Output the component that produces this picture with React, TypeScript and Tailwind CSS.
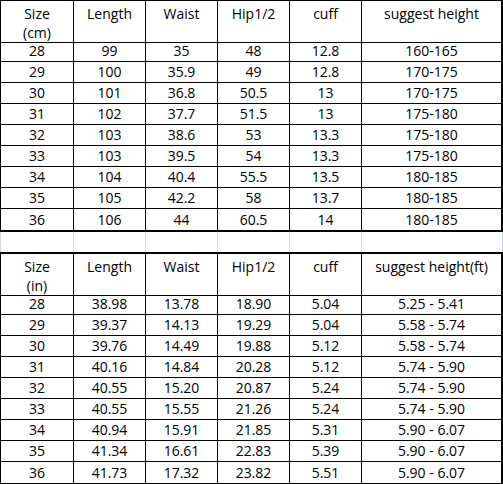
import React from "react";

const t1: string[][] = [
  ["28", "99", "35", "48", "12.8", "160-165"],
  ["29", "100", "35.9", "49", "12.8", "170-175"],
  ["30", "101", "36.8", "50.5", "13", "170-175"],
  ["31", "102", "37.7", "51.5", "13", "175-180"],
  ["32", "103", "38.6", "53", "13.3", "175-180"],
  ["33", "103", "39.5", "54", "13.3", "175-180"],
  ["34", "104", "40.4", "55.5", "13.5", "180-185"],
  ["35", "105", "42.2", "58", "13.7", "180-185"],
  ["36", "106", "44", "60.5", "14", "180-185"],
];

const t2: string[][] = [
  ["28", "38.98", "13.78", "18.90", "5.04", "5.25 - 5.41"],
  ["29", "39.37", "14.13", "19.29", "5.04", "5.58 - 5.74"],
  ["30", "39.76", "14.49", "19.88", "5.12", "5.58 - 5.74"],
  ["31", "40.16", "14.84", "20.28", "5.12", "5.74 - 5.90"],
  ["32", "40.55", "15.20", "20.87", "5.24", "5.74 - 5.90"],
  ["33", "40.55", "15.55", "21.26", "5.24", "5.74 - 5.90"],
  ["34", "40.94", "15.91", "21.85", "5.31", "5.90 - 6.07"],
  ["35", "41.34", "16.61", "22.83", "5.39", "5.90 - 6.07"],
  ["36", "41.73", "17.32", "23.82", "5.51", "5.90 - 6.07"],
];

const cols = "grid grid-cols-[73px_72px_72px_72px_72px_1fr]";

function Table({
  unit,
  last,
  rows,
  topThick,
}: {
  unit: string;
  last: string;
  rows: string[][];
  topThick?: boolean;
}) {
  const head = ["Length", "Waist", "Hip1/2", "cuff", last];
  return (
    <div
      className={`border-l border-r-2 border-b-2 border-black ${
        topThick ? "border-t-2" : "border-t"
      }`}
    >
      <div className={`${cols} h-[40px]`}>
        <div className="border-r border-b border-black flex flex-col items-center pt-[3px] leading-[19px]">
          <span>Size</span>
          <span>{unit}</span>
        </div>
        {head.map((h, i) => (
          <div
            key={i}
            className={`border-b border-black flex justify-center pt-[3px] leading-[19px] ${
              i < 4 ? "border-r" : ""
            }`}
          >
            {h}
          </div>
        ))}
      </div>
      {rows.map((r, ri) => (
        <div key={ri} className={`${cols} h-[21px]`}>
          {r.map((c, ci) => (
            <div
              key={ci}
              className={`flex items-center justify-center leading-[20px] ${
                ci < 5 ? "border-r" : ""
              } ${ri < rows.length - 1 ? "border-b" : ""} border-black`}
            >
              {c}
            </div>
          ))}
        </div>
      ))}
    </div>
  );
}

export default function App() {
  return (
    <div
      className="w-[503px] h-[484px] bg-white text-black text-[14px] overflow-hidden"
      style={{ fontFamily: '"Open Sans", "Liberation Sans", sans-serif' }}
    >
      <Table unit="(cm)" last="suggest height" rows={t1} />
      <div className={`${cols} h-[20px] border-l border-r border-[#d0d7e5]`}>
        {[0, 1, 2, 3, 4, 5].map((i) => (
          <div key={i} className={i < 5 ? "border-r border-[#d0d7e5]" : ""} />
        ))}
      </div>
      <Table unit="(in)" last="suggest height(ft)" rows={t2} topThick />
    </div>
  );
}
